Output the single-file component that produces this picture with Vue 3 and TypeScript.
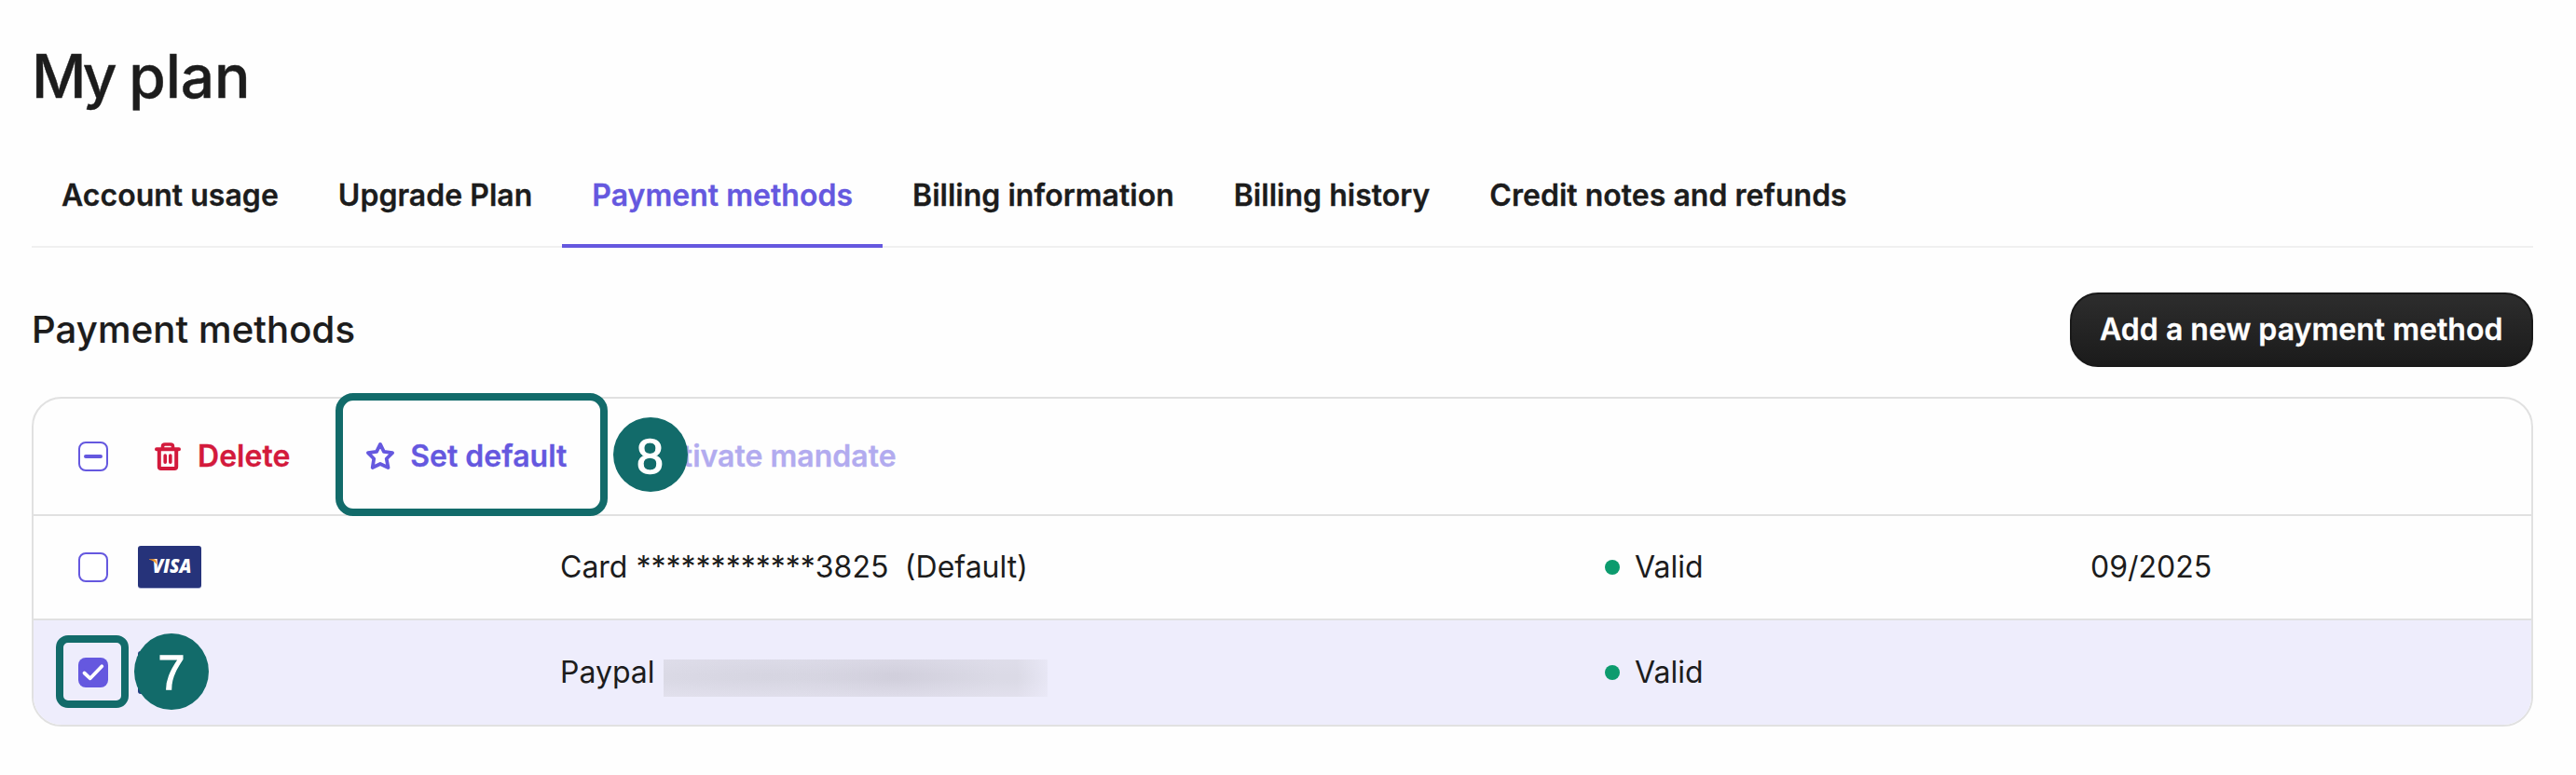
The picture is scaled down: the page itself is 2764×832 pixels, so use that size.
<script setup lang="ts">
import { ref } from 'vue'

interface Method {
  id: string
  brand: 'visa' | 'paypal'
  label: string
  note?: string
  redacted?: boolean
  status: string
  expires: string
  selected: boolean
}

const tabs: string[] = [
  'Account usage',
  'Upgrade Plan',
  'Payment methods',
  'Billing information',
  'Billing history',
  'Credit notes and refunds',
]
const activeTab = ref('Payment methods')

const methods = ref<Method[]>([
  { id: 'card', brand: 'visa', label: 'Card ************3825', note: '(Default)', status: 'Valid', expires: '09/2025', selected: false },
  { id: 'paypal', brand: 'paypal', label: 'Paypal', redacted: true, status: 'Valid', expires: '', selected: true },
])
</script>

<template>
  <main class="page">
    <h1><span class="tight">My</span> plan</h1>

    <nav class="tabs">
      <button
        v-for="tab in tabs"
        :key="tab"
        class="tab"
        :class="{ active: tab === activeTab }"
        @click="activeTab = tab"
      >{{ tab }}</button>
    </nav>

    <header class="section-head">
      <h2>Payment methods</h2>
      <button class="primary">Add a new payment method</button>
    </header>

    <section class="panel">
      <div class="toolbar">
        <span class="check"><span class="dash"></span></span>
        <button class="action danger">
          <svg class="icon" viewBox="0 0 32 32" fill="none" stroke="currentColor" stroke-width="4" stroke-linecap="round" stroke-linejoin="round">
            <path d="M4 8.2H28M6.8 9V27Q6.8 29 8.8 29H23.2Q25.2 29 25.2 27V9" />
            <path d="M10.5 7V5.4Q10.5 3 13 3H19Q21.5 3 21.5 5.4V7" stroke-width="3.6" />
            <path d="M13.2 15V22.2M18.8 15V22.2" stroke-width="3.6" />
          </svg>
          Delete
        </button>
        <button class="action">
          <svg class="icon" viewBox="0 0 32 32" fill="none" stroke="currentColor" stroke-width="3.8" stroke-linecap="round" stroke-linejoin="round">
            <path d="M16 2.9L19.9 10.9L29.1 12.2L22.7 18.5L24.5 28L16 24L7.7 28L9.2 18.5L2.9 12.2L12.1 10.9Z" />
          </svg>
          Set default
        </button>
        <button class="action muted" disabled>Activate mandate</button>
      </div>

      <div v-for="m in methods" :key="m.id" class="row" :class="{ selected: m.selected }">
        <span class="check" :class="{ on: m.selected }" @click="m.selected = !m.selected">
          <svg v-if="m.selected" viewBox="0 0 32 32" fill="none" stroke="#fff" stroke-width="3.8" stroke-linecap="round" stroke-linejoin="round">
            <path d="M6.5 16.5L12.8 22.3L25.3 9.3" />
          </svg>
        </span>
        <svg v-if="m.brand === 'visa'" class="brand" viewBox="0 0 68 46">
          <rect y="1" width="68" height="45" rx="3" fill="#aeb4d6" />
          <rect width="68" height="45" rx="3" fill="#26337a" />
          <text class="visa" x="15.5" y="29" textLength="42" lengthAdjust="spacingAndGlyphs">VISA</text>
          <path d="M12 14.2H17.5Q19.2 14.2 19.6 16L20.4 20.4Q17.5 16 12 14.8Z" fill="#f3982d" />
        </svg>
        <svg v-else class="brand" viewBox="0 0 68 46">
          <rect width="68" height="46" rx="3" fill="#1f3b80" />
        </svg>
        <div class="label">
          <span>{{ m.label }}</span>
          <span v-if="m.note" class="note">{{ m.note }}</span>
          <span v-if="m.redacted" class="redacted"></span>
        </div>
        <div class="status"><i class="dot"></i>{{ m.status }}</div>
        <div>{{ m.expires }}</div>
      </div>
    </section>

    <div class="frame frame-default"></div>
    <div class="step step-default">8</div>
    <div class="frame frame-check"></div>
    <div class="step step-check">7</div>
  </main>
</template>

<style>
body {
  background: #fefefe;
}
</style>

<style scoped>
.page {
  position: relative;
  box-sizing: border-box;
  width: 2764px;
  height: 832px;
  padding: 42px 46px 0 34px;
  overflow: hidden;
  background: #fefefe;
  color: #1c1c1c;
  font: 400 32px/40px Inter, sans-serif;
}
h1 {
  margin: 0;
  font-size: 64px;
  font-weight: 500;
  line-height: 80px;
  letter-spacing: -0.1px;
  -webkit-text-stroke: 0.4px currentColor;
}
.tight {
  letter-spacing: -4.2px;
}
button {
  margin: 0;
  padding: 0;
  border: 0;
  background: none;
  color: inherit;
  font: 600 32px/40px Inter, sans-serif;
  letter-spacing: 0.02px;
  -webkit-text-stroke: 0.3px currentColor;
  white-space: nowrap;
}
.tabs {
  display: flex;
  box-sizing: border-box;
  height: 114px;
  margin-top: 30px;
  box-shadow: inset 0 -2px #f0f0f0;
}
.tab {
  padding: 6px 32px 0;
  border-bottom: 4px solid transparent;
}
.tab.active {
  border-bottom-color: #6558df;
  color: #6558df;
}
.section-head {
  display: flex;
  align-items: center;
  justify-content: space-between;
  height: 80px;
  margin: 48px 0 32px;
}
h2 {
  margin: 0;
  font-size: 40px;
  font-weight: 500;
  line-height: 50px;
  letter-spacing: 0.13px;
  -webkit-text-stroke: 0.2px currentColor;
}
.primary {
  height: 80px;
  padding: 0 32px 0 30px;
  border: 2px solid #191919;
  border-radius: 30px;
  background: linear-gradient(#2d2d2d, #1b1b1b);
  color: #fff;
  box-sizing: border-box;
  width: 497px;
  text-align: center;
}
.panel {
  box-sizing: border-box;
  border: 2px solid #e1e1e1;
  border-radius: 32px;
  overflow: hidden;
}
.toolbar {
  display: flex;
  align-items: center;
  height: 124px;
  padding-left: 48px;
}
.action {
  display: flex;
  align-items: center;
  gap: 16px;
  margin-left: 80.8px;
  color: #6558df;
}
.action.danger {
  margin-left: 48px;
  color: #d31a3c;
}
.action.muted {
  margin-left: 82px;
  color: #b2abef;
}
.icon {
  width: 32px;
  height: 32px;
}
.row {
  display: grid;
  grid-template-columns: 64px 453px 1121px 521px 1fr;
  align-items: center;
  height: 110px;
  padding-left: 48px;
  border-top: 2px solid #e1e1e1;
}
.row.selected {
  height: 112px;
  background: #eeedfc;
}
.check {
  display: flex;
  align-items: center;
  justify-content: center;
  box-sizing: border-box;
  width: 32px;
  height: 32px;
  border: 2px solid #6558df;
  border-radius: 8px;
  background: #fff;
}
.check.on {
  border: 0;
  background: #6558df;
}
.dash {
  width: 20px;
  height: 4px;
  border-radius: 2px;
  background: #6558df;
}
.brand {
  display: block;
  width: 68px;
  height: 46px;
}
.visa {
  fill: #fff;
  font: italic 800 20.5px "Open Sans", sans-serif;
}
.label {
  display: flex;
  align-items: center;
}
.note {
  margin-left: 17.5px;
}
.redacted {
  width: 412px;
  height: 40px;
  margin: 12px 0 0 9.5px;
  background:
    linear-gradient(90deg, transparent 92%, rgba(238, 237, 252, 0.65) 100%),
    linear-gradient(180deg, rgba(230, 228, 242, 0.3), transparent 40%, transparent 55%, rgba(232, 230, 243, 0.5)),
    radial-gradient(ellipse 110px 70px at 60% 45%, #d1cfdc, transparent),
    radial-gradient(ellipse 130px 60px at 27% 40%, #d6d5e1, transparent),
    #dbdae6;
}
.status {
  display: flex;
  align-items: center;
  gap: 16px;
}
.dot {
  width: 16px;
  height: 16px;
  border-radius: 50%;
  background: #0c9b6e;
}
.frame {
  position: absolute;
  box-sizing: border-box;
  border: 8px solid #126b6a;
  pointer-events: none;
}
.frame-default {
  left: 360px;
  top: 422px;
  width: 292px;
  height: 132px;
  border-radius: 19px;
}
.frame-check {
  left: 60px;
  top: 682px;
  width: 78px;
  height: 78px;
  border-radius: 13px;
}
.step {
  position: absolute;
  display: flex;
  align-items: center;
  justify-content: center;
  width: 80px;
  height: 80px;
  border-radius: 50%;
  background: #126b6a;
  color: #fff;
  font: 400 52px/80px "Liberation Sans", Arial, sans-serif;
  -webkit-text-stroke: 1.3px #fff;
}
.step-default {
  left: 658px;
  top: 448px;
  box-sizing: border-box;
  padding: 4px 1px 0 0;
}
.step-check {
  left: 144px;
  top: 680px;
  box-sizing: border-box;
  height: 82px;
  padding-top: 2px;
}
</style>
